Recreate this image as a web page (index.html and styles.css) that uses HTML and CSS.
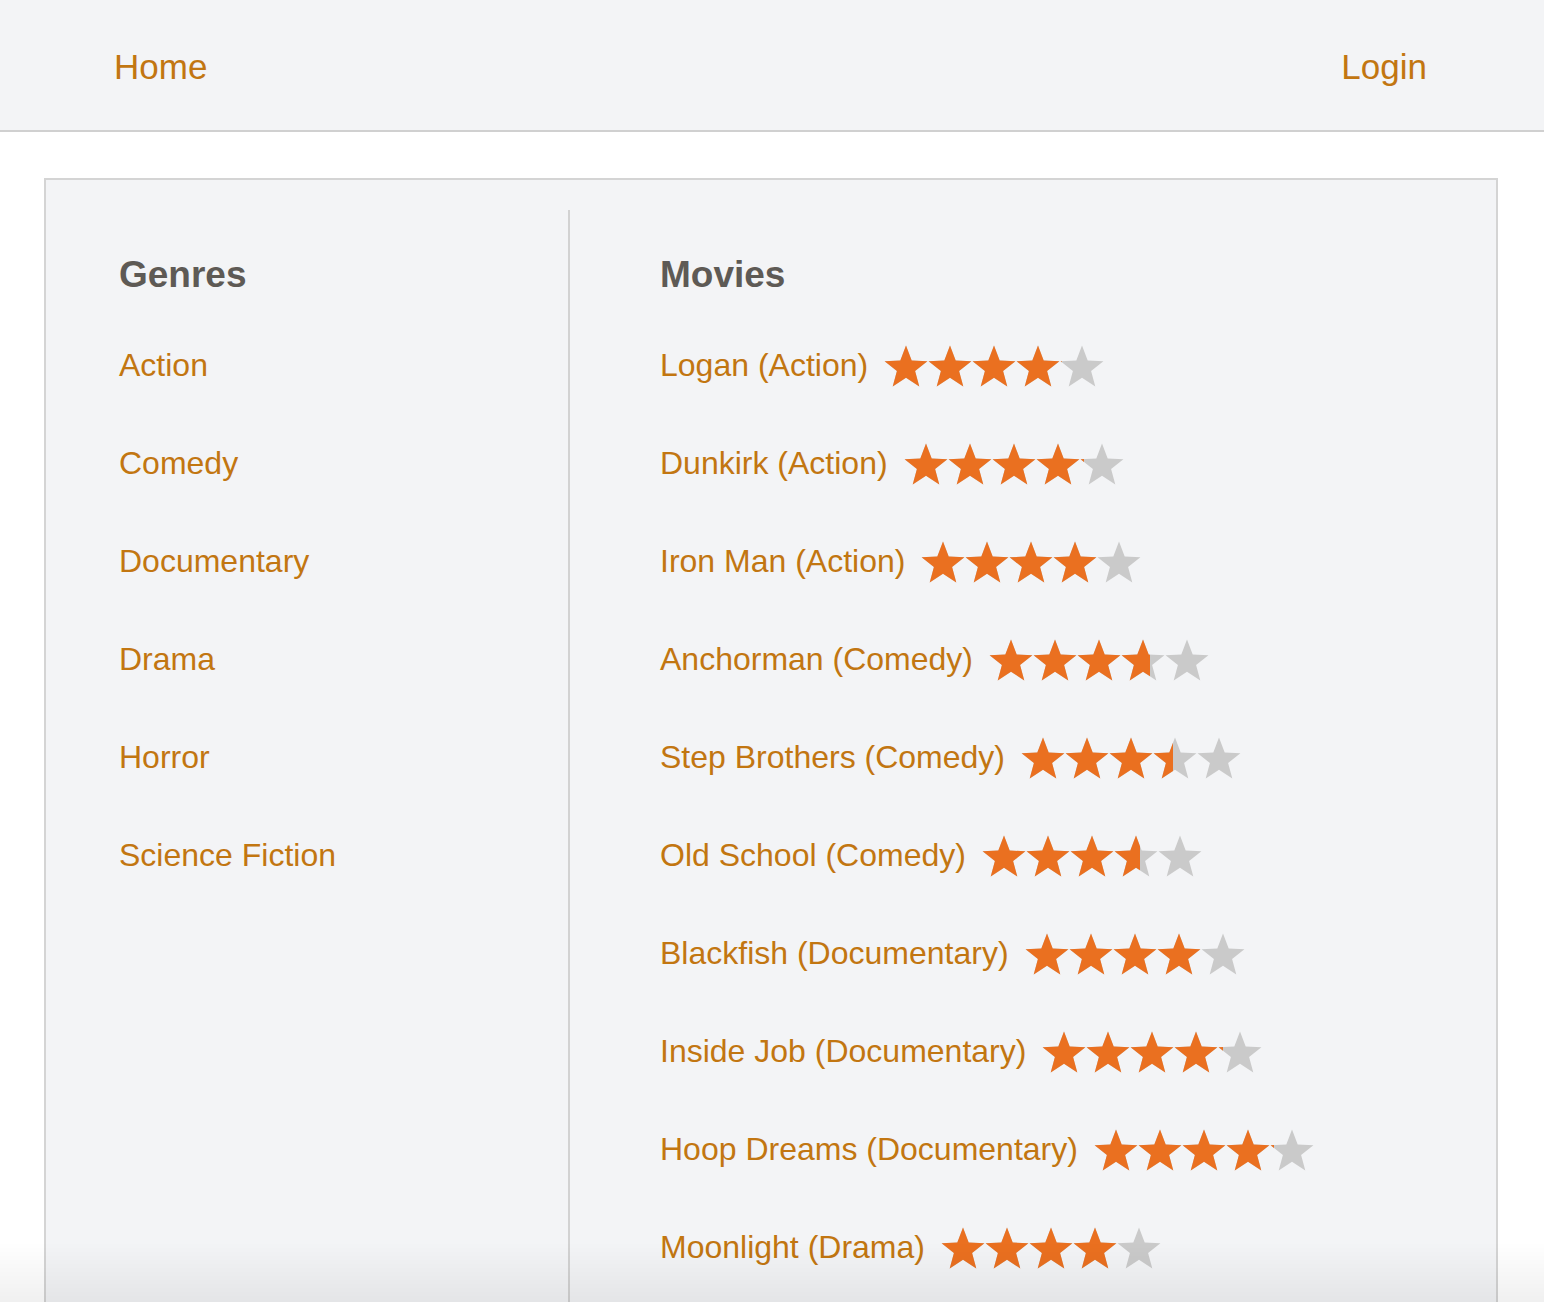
FILE: index.html
```html
<!DOCTYPE html>
<html lang="en">
<head>
<meta charset="utf-8">
<title>Movies</title>
<link rel="stylesheet" href="styles.css">
</head>
<body>
<svg class="defs" width="0" height="0" aria-hidden="true">
  <defs>
    <symbol id="star" viewBox="0 0 44 42">
      <polygon points="22,0.6 27.7,15.6 43.4,16.2 31.1,26.1 35.3,41.4 22,32.7 8.7,41.4 12.9,26.1 0.6,16.2 16.3,15.6"/>
    </symbol>
  </defs>
</svg>

<header class="topbar">
  <a class="nav-link" href="#">Home</a>
  <a class="nav-link" href="#">Login</a>
</header>

<main class="panel">
  <section class="col col-genres">
    <h3 class="col-title">Genres</h3>
    <ul class="list">
      <li class="row"><a href="#">Action</a></li>
      <li class="row"><a href="#">Comedy</a></li>
      <li class="row"><a href="#">Documentary</a></li>
      <li class="row"><a href="#">Drama</a></li>
      <li class="row"><a href="#">Horror</a></li>
      <li class="row"><a href="#">Science Fiction</a></li>
    </ul>
  </section>

  <section class="col col-movies">
    <h3 class="col-title">Movies</h3>
    <ul class="list">
      <li class="row"><a href="#">Logan (Action)</a>
        <span class="stars"><svg class="star-row empty" viewBox="0 0 220 42"><use href="#star" x="0" width="44" height="42"/><use href="#star" x="44" width="44" height="42"/><use href="#star" x="88" width="44" height="42"/><use href="#star" x="132" width="44" height="42"/><use href="#star" x="176" width="44" height="42"/></svg><span class="fill" style="width:81%"><svg class="star-row full" viewBox="0 0 220 42"><use href="#star" x="0" width="44" height="42"/><use href="#star" x="44" width="44" height="42"/><use href="#star" x="88" width="44" height="42"/><use href="#star" x="132" width="44" height="42"/><use href="#star" x="176" width="44" height="42"/></svg></span></span>
      </li>
      <li class="row"><a href="#">Dunkirk (Action)</a>
        <span class="stars"><svg class="star-row empty" viewBox="0 0 220 42"><use href="#star" x="0" width="44" height="42"/><use href="#star" x="44" width="44" height="42"/><use href="#star" x="88" width="44" height="42"/><use href="#star" x="132" width="44" height="42"/><use href="#star" x="176" width="44" height="42"/></svg><span class="fill" style="width:82%"><svg class="star-row full" viewBox="0 0 220 42"><use href="#star" x="0" width="44" height="42"/><use href="#star" x="44" width="44" height="42"/><use href="#star" x="88" width="44" height="42"/><use href="#star" x="132" width="44" height="42"/><use href="#star" x="176" width="44" height="42"/></svg></span></span>
      </li>
      <li class="row"><a href="#">Iron Man (Action)</a>
        <span class="stars"><svg class="star-row empty" viewBox="0 0 220 42"><use href="#star" x="0" width="44" height="42"/><use href="#star" x="44" width="44" height="42"/><use href="#star" x="88" width="44" height="42"/><use href="#star" x="132" width="44" height="42"/><use href="#star" x="176" width="44" height="42"/></svg><span class="fill" style="width:80%"><svg class="star-row full" viewBox="0 0 220 42"><use href="#star" x="0" width="44" height="42"/><use href="#star" x="44" width="44" height="42"/><use href="#star" x="88" width="44" height="42"/><use href="#star" x="132" width="44" height="42"/><use href="#star" x="176" width="44" height="42"/></svg></span></span>
      </li>
      <li class="row"><a href="#">Anchorman (Comedy)</a>
        <span class="stars"><svg class="star-row empty" viewBox="0 0 220 42"><use href="#star" x="0" width="44" height="42"/><use href="#star" x="44" width="44" height="42"/><use href="#star" x="88" width="44" height="42"/><use href="#star" x="132" width="44" height="42"/><use href="#star" x="176" width="44" height="42"/></svg><span class="fill" style="width:73%"><svg class="star-row full" viewBox="0 0 220 42"><use href="#star" x="0" width="44" height="42"/><use href="#star" x="44" width="44" height="42"/><use href="#star" x="88" width="44" height="42"/><use href="#star" x="132" width="44" height="42"/><use href="#star" x="176" width="44" height="42"/></svg></span></span>
      </li>
      <li class="row"><a href="#">Step Brothers (Comedy)</a>
        <span class="stars"><svg class="star-row empty" viewBox="0 0 220 42"><use href="#star" x="0" width="44" height="42"/><use href="#star" x="44" width="44" height="42"/><use href="#star" x="88" width="44" height="42"/><use href="#star" x="132" width="44" height="42"/><use href="#star" x="176" width="44" height="42"/></svg><span class="fill" style="width:69%"><svg class="star-row full" viewBox="0 0 220 42"><use href="#star" x="0" width="44" height="42"/><use href="#star" x="44" width="44" height="42"/><use href="#star" x="88" width="44" height="42"/><use href="#star" x="132" width="44" height="42"/><use href="#star" x="176" width="44" height="42"/></svg></span></span>
      </li>
      <li class="row"><a href="#">Old School (Comedy)</a>
        <span class="stars"><svg class="star-row empty" viewBox="0 0 220 42"><use href="#star" x="0" width="44" height="42"/><use href="#star" x="44" width="44" height="42"/><use href="#star" x="88" width="44" height="42"/><use href="#star" x="132" width="44" height="42"/><use href="#star" x="176" width="44" height="42"/></svg><span class="fill" style="width:72%"><svg class="star-row full" viewBox="0 0 220 42"><use href="#star" x="0" width="44" height="42"/><use href="#star" x="44" width="44" height="42"/><use href="#star" x="88" width="44" height="42"/><use href="#star" x="132" width="44" height="42"/><use href="#star" x="176" width="44" height="42"/></svg></span></span>
      </li>
      <li class="row"><a href="#">Blackfish (Documentary)</a>
        <span class="stars"><svg class="star-row empty" viewBox="0 0 220 42"><use href="#star" x="0" width="44" height="42"/><use href="#star" x="44" width="44" height="42"/><use href="#star" x="88" width="44" height="42"/><use href="#star" x="132" width="44" height="42"/><use href="#star" x="176" width="44" height="42"/></svg><span class="fill" style="width:80%"><svg class="star-row full" viewBox="0 0 220 42"><use href="#star" x="0" width="44" height="42"/><use href="#star" x="44" width="44" height="42"/><use href="#star" x="88" width="44" height="42"/><use href="#star" x="132" width="44" height="42"/><use href="#star" x="176" width="44" height="42"/></svg></span></span>
      </li>
      <li class="row"><a href="#">Inside Job (Documentary)</a>
        <span class="stars"><svg class="star-row empty" viewBox="0 0 220 42"><use href="#star" x="0" width="44" height="42"/><use href="#star" x="44" width="44" height="42"/><use href="#star" x="88" width="44" height="42"/><use href="#star" x="132" width="44" height="42"/><use href="#star" x="176" width="44" height="42"/></svg><span class="fill" style="width:82%"><svg class="star-row full" viewBox="0 0 220 42"><use href="#star" x="0" width="44" height="42"/><use href="#star" x="44" width="44" height="42"/><use href="#star" x="88" width="44" height="42"/><use href="#star" x="132" width="44" height="42"/><use href="#star" x="176" width="44" height="42"/></svg></span></span>
      </li>
      <li class="row"><a href="#">Hoop Dreams (Documentary)</a>
        <span class="stars"><svg class="star-row empty" viewBox="0 0 220 42"><use href="#star" x="0" width="44" height="42"/><use href="#star" x="44" width="44" height="42"/><use href="#star" x="88" width="44" height="42"/><use href="#star" x="132" width="44" height="42"/><use href="#star" x="176" width="44" height="42"/></svg><span class="fill" style="width:82%"><svg class="star-row full" viewBox="0 0 220 42"><use href="#star" x="0" width="44" height="42"/><use href="#star" x="44" width="44" height="42"/><use href="#star" x="88" width="44" height="42"/><use href="#star" x="132" width="44" height="42"/><use href="#star" x="176" width="44" height="42"/></svg></span></span>
      </li>
      <li class="row"><a href="#">Moonlight (Drama)</a>
        <span class="stars"><svg class="star-row empty" viewBox="0 0 220 42"><use href="#star" x="0" width="44" height="42"/><use href="#star" x="44" width="44" height="42"/><use href="#star" x="88" width="44" height="42"/><use href="#star" x="132" width="44" height="42"/><use href="#star" x="176" width="44" height="42"/></svg><span class="fill" style="width:80%"><svg class="star-row full" viewBox="0 0 220 42"><use href="#star" x="0" width="44" height="42"/><use href="#star" x="44" width="44" height="42"/><use href="#star" x="88" width="44" height="42"/><use href="#star" x="132" width="44" height="42"/><use href="#star" x="176" width="44" height="42"/></svg></span></span>
      </li>
    </ul>
  </section>
</main>
<div class="window-shade"></div>
</body>
</html>
```

FILE: styles.css
```css
html, body {
  margin: 0;
  padding: 0;
  background: #ffffff;
  font-family: "Liberation Sans", Arial, Helvetica, sans-serif;
}

.defs {
  position: absolute;
  width: 0;
  height: 0;
  overflow: hidden;
}

a {
  color: #c27611;
  text-decoration: none;
}

.topbar {
  display: flex;
  justify-content: space-between;
  align-items: center;
  height: 130px;
  padding: 0 117px 0 114px;
  background: #f3f4f6;
  border-bottom: 2px solid #d0d0d0;
}

.nav-link {
  font-size: 35px;
  line-height: 40px;
  margin-top: 4px;
}

.panel {
  display: grid;
  grid-template-columns: 524px 1fr;
  margin: 46px 46px 0 44px;
  padding-top: 30px;
  background: #f3f4f6;
  border: 2px solid #d4d4d4;
  border-bottom: none;
  min-height: 1200px;
}

.col {
  padding-top: 44px;
}

.col-genres {
  padding-left: 73px;
  border-right: 2px solid #d2d2d2;
}

.col-movies {
  padding-left: 90px;
}

.col-title {
  margin: 0;
  font-size: 37px;
  line-height: 42px;
  font-weight: bold;
  color: #5e5a55;
}

.list {
  list-style: none;
  margin: 20px 0 0 0;
  padding: 0;
}

.row {
  display: flex;
  align-items: center;
  height: 98px;
  font-size: 32px;
}

.row a {
  line-height: 40px;
}

.stars {
  position: relative;
  display: inline-block;
  width: 220px;
  height: 42px;
  margin-left: 16px;
  margin-top: 2px;
}

.star-row {
  display: block;
  width: 220px;
  height: 42px;
}

.star-row.empty {
  fill: #cacaca;
}

.star-row.full {
  fill: #ea7020;
}

.fill {
  position: absolute;
  left: 0;
  top: 0;
  height: 42px;
  overflow: hidden;
}

.window-shade {
  position: fixed;
  left: 0;
  right: 0;
  bottom: 0;
  height: 60px;
  pointer-events: none;
  background: linear-gradient(to bottom, rgba(0, 0, 0, 0), rgba(0, 0, 0, 0.06));
}
```
